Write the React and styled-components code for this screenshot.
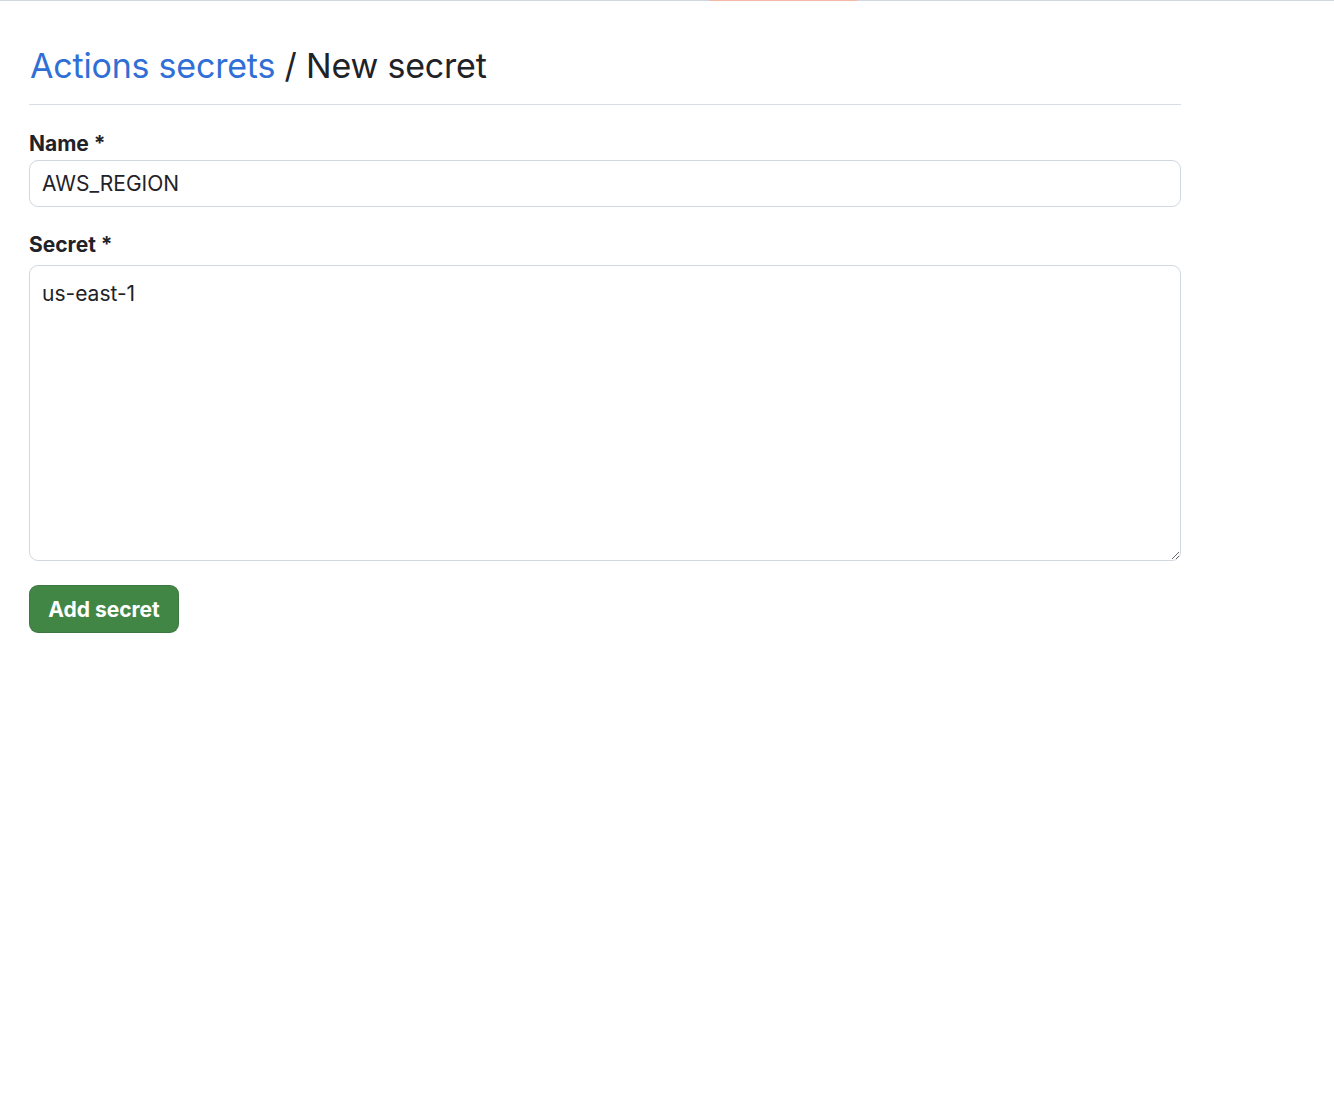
import React, { useState } from "react";
import styled, { createGlobalStyle } from "styled-components";

const GlobalStyle = createGlobalStyle`
  * {
    box-sizing: border-box;
  }
  body {
    margin: 0;
    background: #ffffff;
    font-family: Inter, "Liberation Sans", "Noto Sans", sans-serif;
    color: #1f2328;
  }
`;

const TopBar = styled.div`
  display: flex;
  height: 1px;
  background: #d0d7de;
`;

const TopSegment = styled.span`
  display: block;
  height: 1px;
  width: ${(p) => p.$width}px;
  margin-left: ${(p) => p.$offset}px;
  background: #f4b7a8;
`;

const Page = styled.main`
  width: 1181px;
  padding-left: 29px;
  display: flex;
  flex-direction: column;
`;

const Heading = styled.h1`
  margin: 0;
  padding: 38px 0 11px 1px;
  font-size: 34px;
  line-height: 54px;
  font-weight: 400;
  color: #1f2328;
  border-bottom: 1px solid #d8dee4;
  letter-spacing: -0.2px;
`;

const Crumb = styled.a`
  color: #2f6fd6;
  text-decoration: none;
`;

const Form = styled.form`
  display: flex;
  flex-direction: column;
  margin-top: 24px;
`;

const Field = styled.div`
  display: flex;
  flex-direction: column;
  gap: ${(p) => p.$gap}px;
  margin-bottom: ${(p) => p.$after}px;
`;

const Label = styled.label`
  font-size: 21px;
  font-weight: 700;
  line-height: 30px;
  color: #1f2328;
`;

const TextInput = styled.input`
  width: 100%;
  height: 47px;
  padding: 0 12px;
  font: inherit;
  font-size: 21px;
  color: #1f2328;
  border: 1px solid #d0d7de;
  border-radius: 9px;
  background: #ffffff;
  outline: none;
`;

const TextArea = styled.textarea`
  width: 100%;
  height: 296px;
  padding: 12px 12px;
  font: inherit;
  font-size: 21px;
  line-height: 31px;
  color: #1f2328;
  border: 1px solid #d0d7de;
  border-radius: 9px;
  background: #ffffff;
  outline: none;
  resize: vertical;
`;

const SubmitButton = styled.button`
  align-self: flex-start;
  width: 150px;
  height: 48px;
  font: inherit;
  font-size: 21px;
  font-weight: 700;
  color: #ffffff;
  background: #428646;
  border: 1px solid rgba(31, 35, 40, 0.15);
  border-radius: 9px;
  cursor: pointer;
`;

export default function App() {
  const [name, setName] = useState("AWS_REGION");
  const [secret, setSecret] = useState("us-east-1");

  return (
    <>
      <GlobalStyle />
      <TopBar>
        <TopSegment $offset={709} $width={148} />
      </TopBar>
      <Page>
        <Heading>
          <Crumb href="#">Actions secrets</Crumb> / New secret
        </Heading>
        <Form onSubmit={(e) => e.preventDefault()}>
          <Field $gap={1} $after={23}>
            <Label htmlFor="secret_name">Name *</Label>
            <TextInput
              id="secret_name"
              value={name}
              onChange={(e) => setName(e.target.value)}
            />
          </Field>
          <Field $gap={5} $after={24}>
            <Label htmlFor="secret_value">Secret *</Label>
            <TextArea
              id="secret_value"
              value={secret}
              onChange={(e) => setSecret(e.target.value)}
            />
          </Field>
          <SubmitButton type="submit">Add secret</SubmitButton>
        </Form>
      </Page>
    </>
  );
}
